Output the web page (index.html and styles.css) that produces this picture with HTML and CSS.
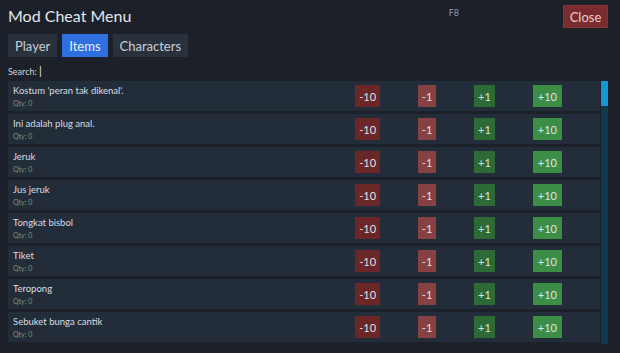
FILE: index.html
```html
<!DOCTYPE html>
<html lang="id">
<head>
    <meta charset="UTF-8">
    <meta name="viewport" content="width=device-width, initial-scale=1.0">
    <title>Mod Cheat Menu</title>
    <link rel="stylesheet" href="styles.css">
</head>
<body>
    <div class="menu">
        <div class="header">
            <h1>Mod Cheat Menu</h1>
            <span class="hotkey">F8</span>
            <button class="close-btn">Close</button>
        </div>
        <div class="tabs">
            <button class="tab">Player</button>
            <button class="tab active">Items</button>
            <button class="tab">Characters</button>
        </div>
        <div class="search">Search: <span class="cursor">|</span></div>
        <div class="list-wrap">
            <div class="item-list" id="item-list"></div>
            <div class="scrollbar"><div class="thumb"></div></div>
        </div>
    </div>

    <script>
        const items = [
            "Kostum 'peran tak dikenal'.",
            "Ini adalah plug anal.",
            "Jeruk",
            "Jus jeruk",
            "Tongkat bisbol",
            "Tiket",
            "Teropong",
            "Sebuket bunga cantik"
        ];
        const steps = [
            { label: "-10", cls: "minus-big" },
            { label: "-1", cls: "minus" },
            { label: "+1", cls: "plus" },
            { label: "+10", cls: "plus-big" }
        ];

        const list = document.getElementById("item-list");
        items.forEach(function(name) {
            const row = document.createElement("div");
            row.className = "item-row";

            const info = document.createElement("div");
            info.className = "item-info";
            info.innerHTML = '<div class="item-name"></div><div class="item-qty">Qty: 0</div>';
            info.querySelector(".item-name").textContent = name;
            row.appendChild(info);

            steps.forEach(function(s) {
                const b = document.createElement("button");
                b.className = "step " + s.cls;
                b.textContent = s.label;
                row.appendChild(b);
            });
            list.appendChild(row);
        });
    </script>
</body>
</html>
```

FILE: styles.css
```css
body {
    margin: 0;
    padding: 0;
    background-color: #1b2029;
    color: #dfe3e8;
    font-family: Lato, "Open Sans", sans-serif;
}
button {
    font-family: inherit;
    border: none;
    cursor: pointer;
}
.menu {
    padding: 5px 12px 0 8px;
}
.header {
    display: flex;
    align-items: flex-start;
    height: 29px;
}
h1 {
    margin: 0;
    font-size: 16px;
    font-weight: 400;
    line-height: 22px;
    color: #e4e7eb;
}
.hotkey {
    margin-left: auto;
    margin-right: 104px;
    margin-top: 2px;
    font-size: 9px;
    color: #8a9ab5;
}
.close-btn {
    width: 45px;
    height: 23px;
    padding: 0;
    background: #7a2b2d;
    border: 1px solid #8a3234;
    color: #e6cfcf;
    font-size: 13px;
}
.tabs {
    display: flex;
    gap: 5px;
}
.tab {
    height: 23px;
    padding: 0 7px;
    background: #29313c;
    color: #c9ced6;
    font-size: 13px;
}
.tab.active {
    background: #2f6fe0;
    color: #e8eefb;
}
.search {
    margin-top: 7px;
    height: 17px;
    font-size: 9px;
    color: #d0d5dc;
}
.cursor {
    font-size: 11px;
    color: #e8e8e8;
}
.list-wrap {
    display: flex;
    height: 263px;
}
.item-list {
    flex: 1;
    overflow: hidden;
}
.item-row {
    display: flex;
    align-items: center;
    gap: 38px;
    height: 30px;
    margin-bottom: 3px;
    padding: 0 38px 0 5px;
    background: #232d3a;
}
.item-info {
    flex: 1;
}
.item-name {
    font-size: 9.5px;
    color: #d8dde3;
    line-height: 12px;
}
.item-qty {
    font-size: 7px;
    color: #7f9876;
    margin-top: 2px;
}
.step {
    height: 22px;
    padding: 0 4px;
    font-size: 11px;
    color: #dfe3e6;
}
.minus-big { background: #6b2627; }
.minus { background: #874142; width: 18px; padding: 0; }
.plus { background: #2d6a35; }
.plus-big { background: #3c8e47; padding: 0 5px; }
.scrollbar {
    width: 7px;
    margin-left: 1px;
    background: #0e3a4e;
}
.thumb {
    height: 25px;
    background: #1597d4;
}
```
